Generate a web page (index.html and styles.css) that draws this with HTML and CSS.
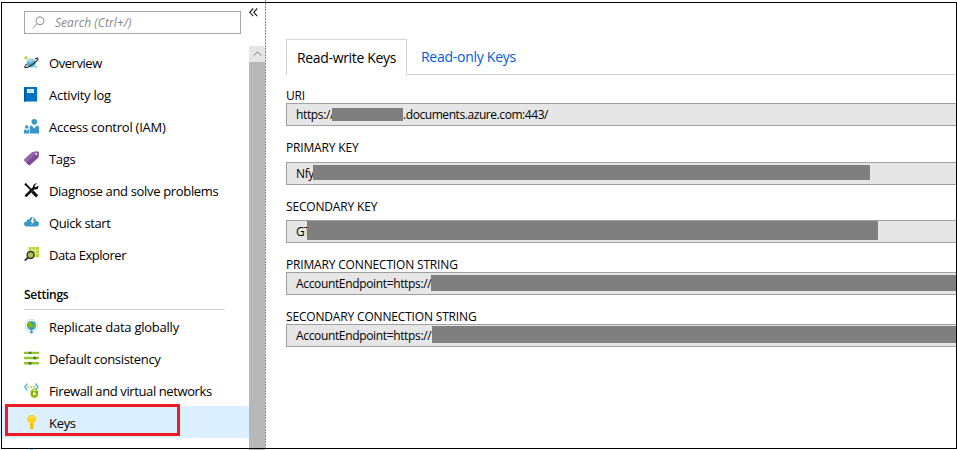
FILE: index.html
```html
<!DOCTYPE html>
<html lang="en">
<head>
<meta charset="utf-8">
<title>Keys</title>
<link rel="stylesheet" href="styles.css">
</head>
<body>
<div class="app">
  <aside class="sidebar">
    <div class="top">
      <div class="search">
        <svg width="13" height="13" viewBox="0 0 13 13" fill="none" stroke="#8c8c8c"><circle cx="8" cy="4.7" r="4"/><path d="M5.2 7.6L.6 12.3"/></svg>
        <span>Search (Ctrl+/)</span>
      </div>
      <svg class="collapse" width="9" height="9" viewBox="0 0 9 9" fill="none" stroke="#222" stroke-width="1.2"><path d="M4.2.5L.8 4.3l3.4 3.8M8.2.5L4.8 4.3l3.4 3.8"/></svg>
    </div>
    <div class="body">
      <nav class="menu">
        <a class="item"><svg viewBox="0 0 16 16"><circle cx="7.7" cy="8.5" r="4.8" fill="#59b4d9"/><path d="M4 6c2-3 6-3 7.5-.5L6 8z" fill="#a5d7ec"/><path d="M3.2 9.4C.4 12 .1 13.7 2 13.5c3.2-.3 11.8-6.1 12.8-9.2.5-1.5-1.5-1-3-.4" fill="none" stroke="#333" stroke-width="1.2"/><path d="M2.2 1v4M.2 3h4" stroke="#b8d432" stroke-width="1.3"/><path d="M12 12.8h2" stroke="#59d0f0" stroke-width="2"/></svg><span class="tight">Overview</span></a>
        <a class="item"><svg viewBox="0 0 16 16"><path d="M0 0h14v15.500H0z" fill="#0072c6"/><path d="M0 0h1.500v15.500H0z" fill="#00569b"/><path d="M3.200 2.300h7.500v4H3.200z" fill="#fff"/><path d="M4.500 4.300h5" stroke="#7db8e2"/></svg><span class="loose">Activity log</span></a>
        <a class="item"><svg viewBox="0 0 16 16" fill="#3999c6"><circle cx="11" cy="3" r="3"/><path d="M6 15.500V9.300Q6 7 8.200 7L11 10l2.600-3Q16 7 16 9.300V15.500z"/><circle cx="2.900" cy="8.600" r="1.900"/><path d="M0 15.500v-2.900Q0 11 1.300 11L3 12.500 4.400 11Q5.500 11 5.500 12.500V15.500z"/></svg><span class="loose">Access control (IAM)</span></a>
        <a class="item"><svg viewBox="0 0 16 16"><path d="M9 1L14.500.5q1.500 0 1.500 1.500L15.500 7 6.500 15Q5.500 15.700 4.700 14.800L.5 10.500Q-.2 9.500.6 8.700z" fill="#804998"/><path d="M9 1L14.500.5 2.600 12.500.5 10.500Q-.2 9.500.6 8.700z" fill="#9565ac"/><circle cx="13" cy="3.200" r="1.100" fill="#fff"/></svg><span>Tags</span></a>
        <a class="item"><svg viewBox="0 0 16 16" fill="none" stroke="#111"><path d="M1.500 1l6.500 6.800" stroke-width="2"/><path d="M8.800 9l5.200 5.200" stroke-width="3.300"/><path d="M1.500 14.300L11 4.800" stroke-width="2.700"/><path d="M13.700.3l-2.500 2.700.8 1.500 3.300-1.700q.4 3.700-2.700 4.200-3.500 0-3-3.500Q10.300.3 13.700.3zM.3 1.300L2 0l1.600 3-1.300.5z" fill="#111" stroke="none"/></svg><span class="mid">Diagnose and solve problems</span></a>
        <a class="item"><svg viewBox="0 0 16 16"><path d="M3 12.300Q0 12 0 9.400 0 7.200 2.500 6.800 3 4.500 5.600 4.400 7 1.800 9.500 2.300 12.500 3 12.800 6.300 16 6.700 16 9.500 15.800 12.300 12.300 12.300z" fill="#3999c6"/><path d="M9 3L7 7.500h2L7.400 11l4.200-5H9.400L11 3z" fill="#fff"/></svg><span class="snug">Quick start</span></a>
        <a class="item"><svg viewBox="0 0 16 16"><path d="M5 0h11v11H5z" fill="#b8d432"/><path d="M8.500 0v11M12.200 0v11M5 3.500h11M5 7.200h11" stroke="#eff6c9" stroke-width=".7"/><circle cx="7" cy="8.500" r="3.700" fill="#a9c34b" stroke="#333" stroke-width="1.500"/><path d="M4.300 11.200L.8 14.500" stroke="#333" stroke-width="2"/></svg><span class="tight">Data Explorer</span></a>
        <h2 class="heading">Settings</h2>
        <a class="item"><svg viewBox="0 0 16 16"><circle cx="8" cy="7" r="6.600" fill="none" stroke="#b9dff0"/><circle cx="8" cy="7" r="4.900" fill="#3999c6"/><path d="M4 4.500q2.500-2.500 5-1.500l-1 2.500 1.500 1-2 3Q5 9 4 7zM10 5l2.300.6q.3 2.600-1.900 4.400L9.500 8z" fill="#7fba00"/><path d="M8 11.500v3" stroke="#3999c6"/><circle cx="8" cy="14" r="1.400" fill="#3999c6"/></svg><span class="loose">Replicate data globally</span></a>
        <a class="item"><svg viewBox="0 0 16 16"><path d="M0 2h16M0 7.500h16M0 13h16" stroke="#9bcf45" stroke-width="2.600"/><path d="M0 2h16M0 7.500h16M0 13h16" stroke="#7fba00" stroke-width=".8"/><path d="M5 2h3M10 7.500h3M5 13h3" stroke="#526b35" stroke-width="2.600"/></svg><span class="mid">Default consistency</span></a>
        <a class="item"><svg viewBox="0 0 16 16" fill="none"><path d="M3.700.5L.7 4.300l3 3.800M12 .5l3 3.800-2.500 3" stroke="#59b4d9" stroke-width="1.400"/><path d="M3.700 4.300h1.300M7 4.300h1.300M10.300 4.300h1.300" stroke="#7fba00" stroke-width="1.500"/><path d="M7 8.500h8v4.300Q14.500 15.300 11 16 7.500 15.300 7 12.800z" fill="#7fba00"/><path d="M8.700 9V7.500Q11 5.300 13.300 7.500V9" stroke="#7fba00" stroke-width="1.200"/><path d="M9.600 10.200h2.800v2.800H9.600z" fill="#fff"/></svg><span class="snug">Firewall and virtual networks</span></a>
        <a class="item selected"><svg viewBox="0 0 16 16"><path d="M6 0h4.500L13 2.800v3.200L10.500 8.500v5.500L8.300 16l-2.200-2V8.500L3.500 6V2.800z" fill="#fcd116"/><path d="M6 2.800h4.500" stroke="#fff4b3" stroke-width="1.200"/><path d="M8.300 9v5.500" stroke="#e5a800"/></svg><span>Keys</span></a>
        <div class="peek"></div>
      </nav>
      <div class="scroll"><div class="arrow"><svg width="9" height="6" viewBox="0 0 9 6" fill="none" stroke="#777"><path d="M.6 4.700l3.900-3.900 3.900 3.900"/></svg></div></div>
    </div>
    <div class="divider"></div>
  </aside>
  <main class="main">
    <div class="tabs"><div class="tab active"><span>Read-write Keys</span></div><div class="tab"><span>Read-only Keys</span></div></div>
    <section class="field uri"><label>URI</label><div class="box"><span class="value">https://</span><i class="mask"></i><span class="domain">.documents.azure.com:443/</span></div></section>
    <section class="field pk"><label>PRIMARY KEY</label><div class="box"><span class="value">Nfy</span><i class="mask"></i></div></section>
    <section class="field sk"><label>SECONDARY KEY</label><div class="box"><span class="value">GT</span><i class="mask"></i></div></section>
    <section class="field pc"><label>PRIMARY CONNECTION STRING</label><div class="box"><span class="value">AccountEndpoint=https://</span><i class="mask"></i></div></section>
    <section class="field sc"><label>SECONDARY CONNECTION STRING</label><div class="box"><span class="value">AccountEndpoint=https://</span><i class="mask"></i></div></section>
  </main>
  <div class="frame"></div>
  <div class="highlight"></div>
</div>
</body>
</html>
```
FILE: styles.css
```css
* { box-sizing: border-box; }
body { margin: 0; background: #fff; color: #000; font: 13px "Open Sans", "Noto Sans", sans-serif; overflow: hidden; }
.app { display: flex; width: 957px; height: 450px; position: relative; overflow: hidden; }
.frame { position: absolute; inset: 2px 0 1px 1px; border: 1px solid #000; }
.highlight { position: absolute; left: 5px; top: 404px; width: 175px; height: 32px; border: 3px solid #ed1c24; }
.sidebar { width: 266px; height: 450px; display: grid; grid-template: 46px 404px / 265px 1px; flex: none; }
.divider { grid-area: 1 / 2 / 3 / 3; background: repeating-linear-gradient(#1fb4e0 0 2px, #d9f2fb 2px 3px); }
.top { height: 46px; display: flex; padding: 11px 0 0 24px; }
.search { width: 217px; height: 23px; border: 1px solid #a6a6a6; display: flex; align-items: center; padding-left: 7px; gap: 10px; font-size: 12px; font-style: italic; color: #888; white-space: nowrap; }
.search span { letter-spacing: .05px; }
.collapse { margin: -3px 0 0 8px; }
.body { grid-area: 2 / 1; display: flex; overflow: hidden; }
.menu { width: 249px; }
.item { height: 32px; display: flex; align-items: center; padding: 2px 0 0 24px; gap: 10px; white-space: nowrap; }
.item svg { width: 15px; height: 15px; flex: none; position: relative; top: -1px; }
.selected { background: #dceffe; }
.peek { width: 3px; height: 1px; margin: 11px 0 0 30px; background: #8dcbe6; }
.heading { margin: 0 24px; height: 40px; padding-top: 16px; border-bottom: 1px solid #d4d4d4; font-size: 12px; line-height: 18px; font-weight: 600; letter-spacing: -.25px; }
.scroll { width: 16px; background: #b8b8b8; }
.arrow { height: 16px; background: #e6e6e6; display: flex; align-items: center; justify-content: center; }
.item span { letter-spacing: -.3px; }
.item .loose { letter-spacing: -.24px; }
.item .mid { letter-spacing: -.34px; }
.item .snug { letter-spacing: -.39px; }
.item .tight { letter-spacing: -.45px; }
.main { flex: 1; min-width: 0; padding: 39px 0 0 20px; }
.tabs { height: 36px; display: flex; font-size: 14px; white-space: nowrap; }
.tab { flex: 1; height: 36px; padding-left: 14px; line-height: 36px; border-bottom: 1px solid #d4d4d4; color: #015cda; letter-spacing: -.27px; }
.tab.active { flex: none; width: 121px; padding-left: 10px; border: 1px solid #d4d4d4; border-bottom: 0; color: #000; letter-spacing: -.33px; }
.field { display: flex; flex-direction: column; }
.field label { height: 16px; line-height: 16px; font-size: 12px; letter-spacing: -.17px; white-space: nowrap; }
.box { height: 23px; border: 1px solid #a0a0a0; border-right: 0; background: #e6e6e6; display: flex; padding-left: 9px; font-size: 12px; line-height: 21px; white-space: nowrap; letter-spacing: -.35px; }
.mask { background: #7f7f7f; flex: none; position: relative; }
.value { flex: none; }
.domain { letter-spacing: -.43px; }
.uri { padding-top: 13px; }
.uri label { height: 15px; }
.uri .value { width: 36px; }
.uri .mask { width: 71px; height: 13px; margin-top: 4px; }
.pk { padding-top: 14px; }
.pk label { height: 22px; }
.pk .value { width: 17px; }
.pk .mask { width: 557px; height: 15px; margin-top: 2px; }
.sk { padding-top: 14px; }
.sk label { height: 21px; }
.sk .value { width: 11px; }
.sk .mask { width: 571px; height: 19px; }
.pc { padding-top: 14px; }
.pc label { height: 15px; }
.pc .value { width: 135px; }
.pc .mask { width: 526px; height: 16px; margin-top: 2px; }
.sc { padding-top: 14px; }
.sc label { height: 15px; }
.sc .value { width: 136px; }
.sc .mask { width: 525px; height: 17px; margin-top: 1px; }
```
